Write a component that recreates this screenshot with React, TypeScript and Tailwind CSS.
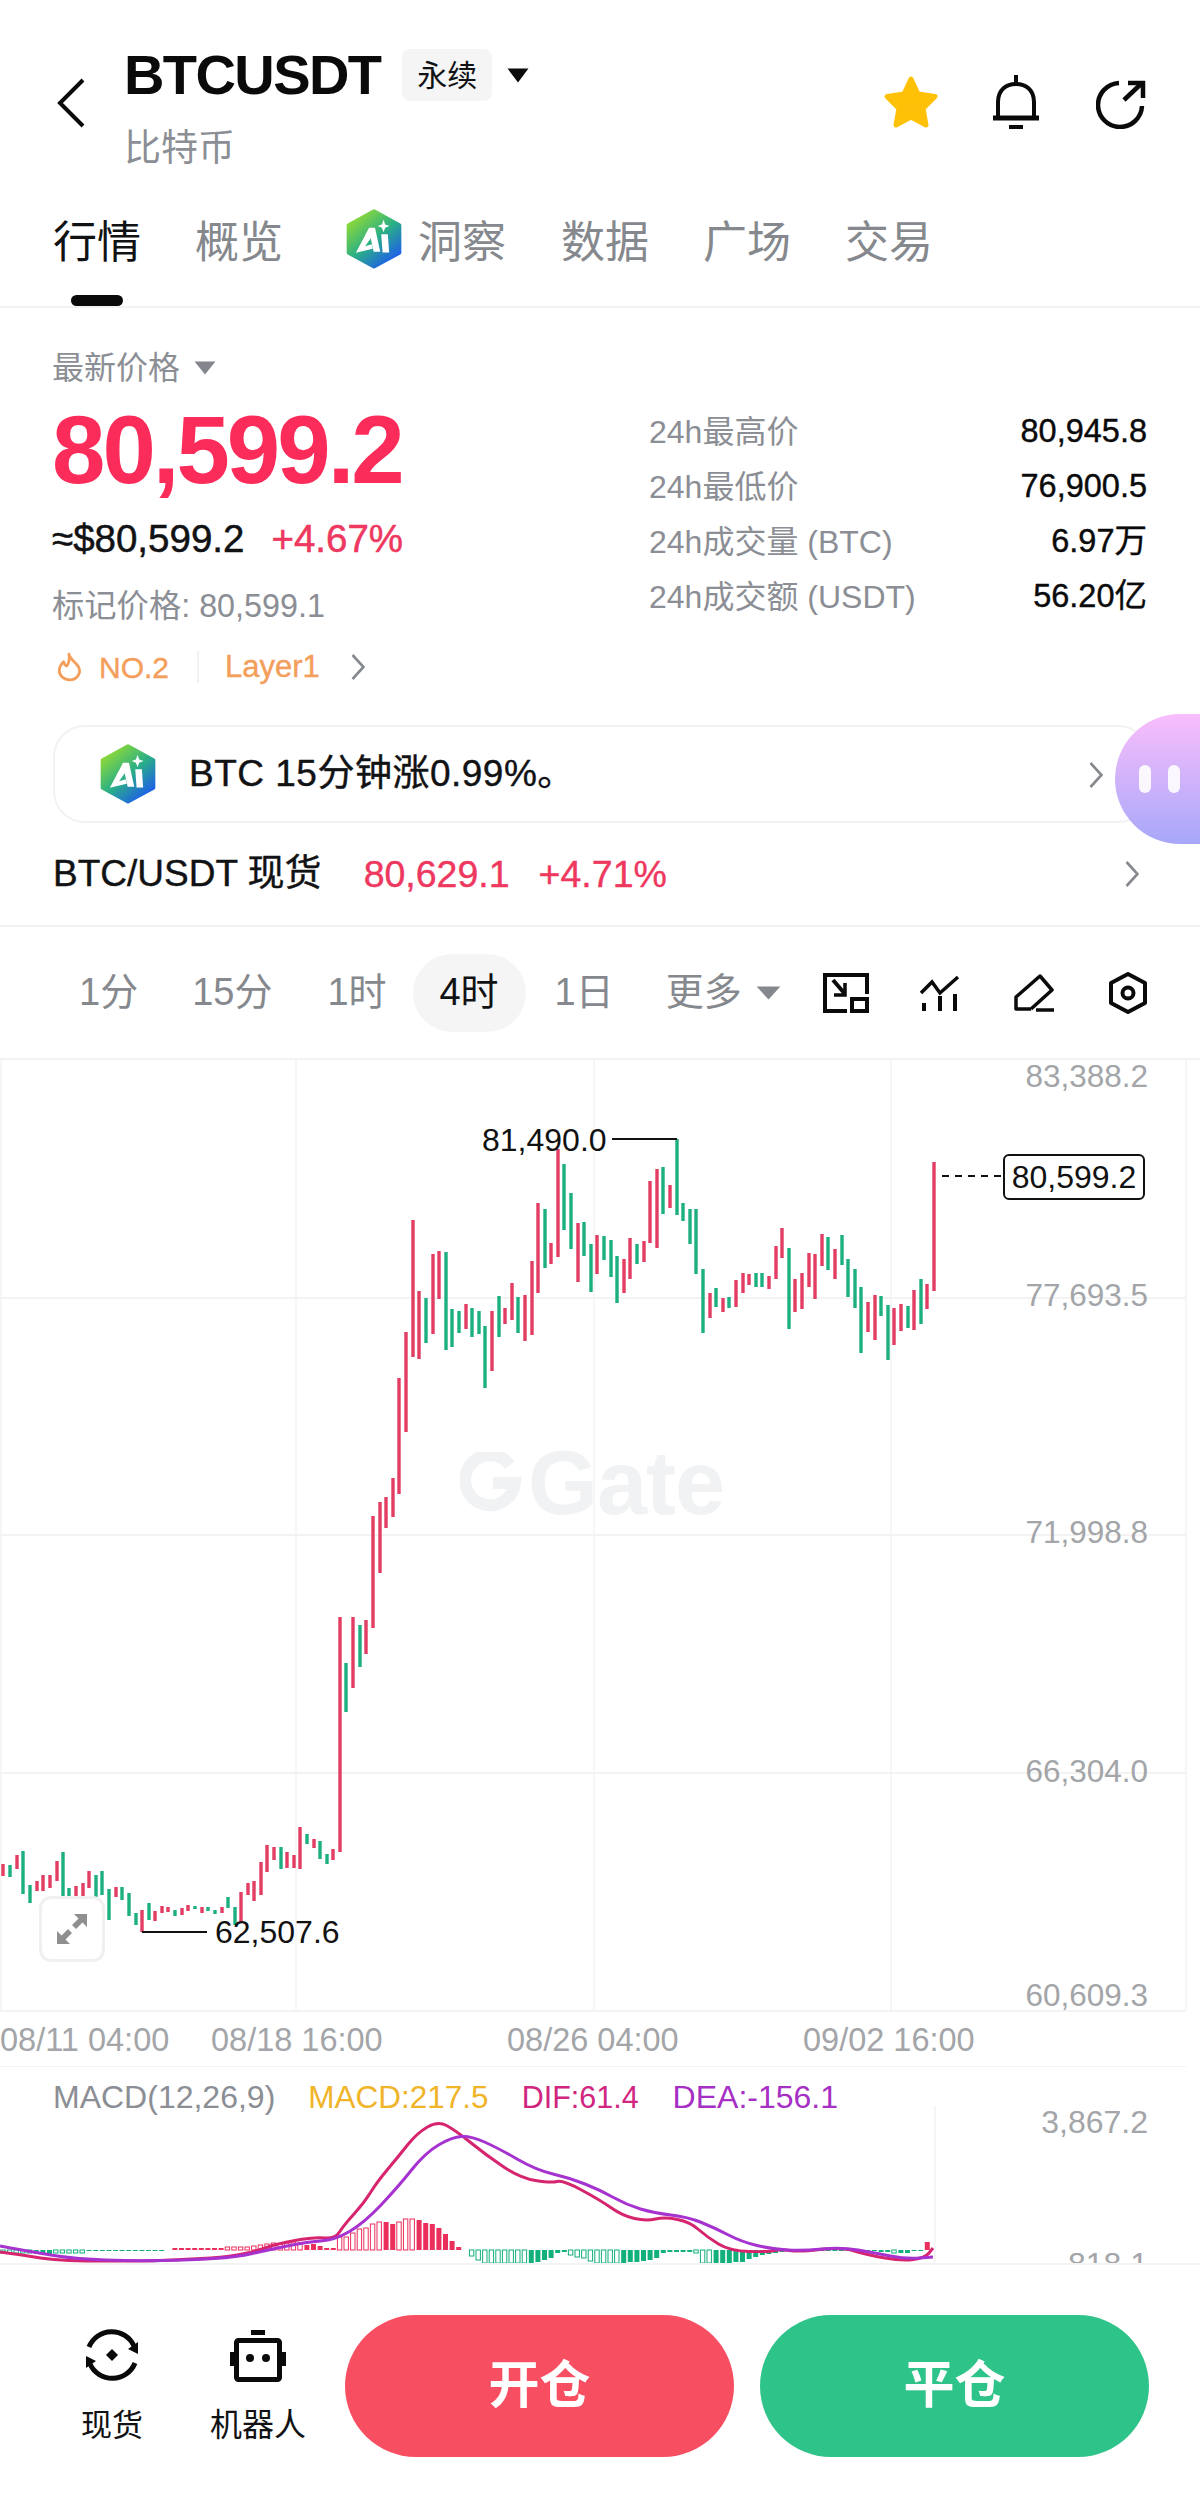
const candles: [number, number, number, string][] = [
  [3,1864,1876,"r"],[10,1865,1877,"g"],[17,1855,1869,"r"],[23,1851,1894,"g"],[30,1885,1903,"g"],[37,1881,1891,"r"],[43,1875,1891,"r"],[50,1875,1888,"r"],
  [57,1861,1881,"r"],[63,1852,1899,"g"],[69,1888,1899,"g"],[76,1886,1897,"r"],[83,1883,1897,"r"],[89,1871,1888,"r"],[96,1875,1897,"g"],[102,1871,1895,"g"],
  [109,1889,1920,"g"],[116,1887,1897,"r"],[122,1887,1900,"g"],[129,1893,1916,"g"],[136,1913,1925,"g"],[142,1910,1932,"r"],[149,1903,1920,"g"],[155,1911,1921,"r"],
  [162,1906,1913,"r"],[168,1907,1912,"r"],[175,1910,1916,"g"],[182,1908,1915,"r"],[188,1905,1911,"r"],[195,1906,1909,"g"],[202,1907,1913,"r"],[208,1907,1911,"g"],
  [215,1910,1914,"g"],[222,1907,1913,"r"],[228,1897,1908,"g"],[235,1907,1925,"g"],[241,1892,1923,"r"],[248,1883,1895,"r"],[254,1881,1901,"r"],[261,1862,1895,"r"],
  [267,1845,1872,"r"],[274,1847,1860,"r"],[281,1847,1869,"g"],[287,1852,1868,"r"],[294,1855,1868,"r"],[300,1827,1869,"r"],[307,1834,1844,"g"],[314,1839,1848,"r"],
  [320,1841,1859,"g"],[327,1854,1864,"g"],[333,1849,1860,"r"],[340,1617,1852,"r"],[346,1663,1712,"g"],[353,1617,1688,"r"],[360,1625,1667,"g"],[366,1620,1654,"r"],
  [373,1516,1628,"r"],[380,1502,1573,"r"],[386,1497,1528,"r"],[393,1478,1517,"r"],[399,1378,1494,"r"],[406,1332,1432,"r"],[413,1220,1357,"r"],[419,1291,1359,"r"],
  [426,1298,1343,"g"],[433,1254,1334,"r"],[439,1251,1299,"r"],[446,1252,1350,"g"],[452,1309,1347,"g"],[459,1311,1333,"g"],[466,1304,1329,"r"],[472,1308,1337,"g"],
  [479,1311,1334,"g"],[485,1326,1388,"g"],[492,1311,1371,"r"],[499,1296,1337,"g"],[505,1308,1324,"r"],[512,1283,1320,"r"],[518,1297,1333,"g"],[525,1295,1341,"r"],
  [532,1261,1335,"r"],[538,1203,1293,"r"],[545,1209,1268,"g"],[551,1243,1264,"r"],[558,1149,1257,"r"],[564,1164,1230,"g"],[571,1193,1249,"g"],[578,1223,1282,"r"],
  [584,1222,1256,"g"],[591,1244,1292,"g"],[597,1235,1274,"r"],[604,1236,1260,"g"],[611,1240,1277,"g"],[617,1256,1303,"g"],[624,1259,1293,"r"],[630,1238,1279,"r"],
  [637,1244,1264,"g"],[644,1241,1262,"r"],[650,1181,1243,"r"],[657,1169,1248,"r"],[663,1167,1214,"g"],[670,1185,1208,"r"],[677,1139,1215,"g"],[683,1203,1221,"g"],
  [690,1209,1244,"g"],[696,1209,1274,"g"],[703,1269,1333,"g"],[710,1293,1318,"r"],[716,1288,1307,"g"],[723,1298,1312,"r"],[729,1297,1308,"g"],[736,1280,1307,"r"],
  [743,1273,1293,"r"],[749,1274,1285,"r"],[756,1273,1287,"g"],[762,1273,1287,"g"],[769,1276,1289,"r"],[776,1246,1279,"r"],[782,1228,1258,"r"],[789,1248,1329,"g"],
  [795,1279,1312,"r"],[802,1273,1309,"r"],[809,1253,1287,"r"],[815,1254,1299,"r"],[822,1234,1266,"r"],[828,1237,1270,"g"],[835,1249,1279,"r"],[842,1235,1265,"g"],
  [848,1259,1297,"g"],[855,1269,1308,"g"],[861,1287,1353,"g"],[868,1302,1332,"r"],[875,1295,1340,"r"],[881,1296,1316,"g"],[888,1305,1360,"g"],[894,1308,1345,"r"],
  [901,1304,1331,"r"],[908,1306,1328,"g"],[914,1290,1330,"r"],[921,1279,1324,"g"],[927,1284,1309,"r"],[934,1162,1291,"r"],
];

const hist = [
  -3,-3,-3,-3,-3,-4,-4,-4,-3,-3,-3,-3,-3,-1,-1,-1,-1,-1,-1,-1,-1,-1,-1,-1,-1,0,
  2,2,2,2,2,2,2,2,3,3,3,3,4,5,6,7,6,7,8,7,5,6,4,2,2,
  13,13,17,21,22,26,28,28,26,28,31,31,30,27,26,22,16,9,3,0,
  -6,-10,-13,-13,-13,-13,-13,-13,-13,-13,-12,-10,-8,-3,-2,-5,-7,-8,-11,-13,-13,-13,-13,-13,
  -12,-12,-11,-10,-8,-3,-2,-2,-2,-2,-3,-13,-13,-13,-13,-13,-12,-12,-9,-7,-5,-4,-3,-2,-1,
  -1,-1,-1,-1,-1,-1,-1,-1,-1,-1,-1,-1,-1,-2,-2,-3,-3,-3,-1,-1,8,
];
const hollowRanges = [[0, 4], [8, 12], [26, 45], [51, 57], [60, 62], [71, 79], [86, 93], [102, 107], [132, 135], [141, 141]];
const isHollow = (i: number) => hollowRanges.some(([a, b]) => i >= a && i <= b);

const dif: [number, number][] = [
  [0,2252],[23,2255],[46,2259],[77,2261],[115,2261],[153,2261],[191,2259],[230,2257],[260,2250],[276,2244],[314,2237],[335,2239],[344,2225],[364,2203],[377,2182],
  [398,2157],[417,2133],[438,2121],[455,2130],[486,2155],[520,2178],[551,2183],[563,2180],[600,2200],[623,2216],[646,2221],[665,2217],[690,2222],[707,2237],[730,2251],
  [768,2252],[780,2249],[799,2252],[841,2247],[868,2255],[902,2261],[925,2258],[933,2248],
];
const dea: [number, number][] = [
  [0,2246],[38,2253],[77,2259],[134,2261],[191,2260],[237,2257],[268,2250],[306,2242],[335,2240],[364,2223],[398,2187],[425,2153],[452,2137],[471,2136],[498,2148],
  [536,2170],[570,2178],[600,2190],[627,2205],[654,2213],[688,2217],[715,2228],[742,2242],[772,2249],[803,2251],[841,2247],[875,2253],[906,2259],[933,2257],
];

// smooth a list of points through the midpoints
function smooth(pts: [number, number][]) {
  let d = `M${pts[0][0]} ${pts[0][1]}`;
  for (let i = 1; i < pts.length - 1; i++) {
    const mx = (pts[i][0] + pts[i + 1][0]) / 2;
    const my = (pts[i][1] + pts[i + 1][1]) / 2;
    d += ` Q${pts[i][0]} ${pts[i][1]} ${mx} ${my}`;
  }
  const last = pts[pts.length - 1];
  return d + ` L${last[0]} ${last[1]}`;
}

const stats = [
  { label: "24h最高价", value: "80,945.8" },
  { label: "24h最低价", value: "76,900.5" },
  { label: "24h成交量 (BTC)", value: "6.97万" },
  { label: "24h成交额 (USDT)", value: "56.20亿" },
];

function Chevron({ className = "" }: { className?: string }) {
  return (
    <svg width="14" height="28" viewBox="0 0 14 28" fill="none" stroke="#85888d" strokeWidth="2.6" className={className}>
      <path d="M1.5 2 L12.5 14 L1.5 26" />
    </svg>
  );
}

function Caret({ color, w, h }: { color: string; w: number; h: number }) {
  return (
    <svg width={w} height={h} viewBox="0 0 20 14" preserveAspectRatio="none">
      <path d="M0.5 0.5 H19.5 L10 13.5 Z" fill={color} />
    </svg>
  );
}

function AiLogo({ size, id }: { size: number; id: string }) {
  return (
    <svg width={size} height={size * 1.07} viewBox="20 14 170 180" className="shrink-0">
      <defs>
        <linearGradient id={id} x1="0.15" y1="0.1" x2="0.8" y2="0.95">
          <stop offset="0" stopColor="#8bd83a" />
          <stop offset="0.5" stopColor="#2bb085" />
          <stop offset="1" stopColor="#1d5fe8" />
        </linearGradient>
      </defs>
      <path d="M105 20 L182 62 V146 L105 188 L28 146 V62 Z" fill={`url(#${id})`} stroke={`url(#${id})`} strokeWidth="12" strokeLinejoin="round" />
      <path d="M90 70 H108 L124 143 H104 L95 102 L78 126 L98 120 L101 134 L50 146 Z" fill="#fff" />
      <path d="M127 90 H147 L151 145 H131 Z" fill="#fff" />
      <path d="M134 46 L139 60 L152 65 L139 70 L134 84 L129 70 L116 65 L129 60 Z" fill="#fff" />
    </svg>
  );
}

function Tab({ label, active }: { label: string; active?: boolean }) {
  return (
    <div className={`relative h-[110px] pt-[17px] text-[44px] leading-[60px] ${active ? "text-[#111214]" : "text-[#85888d]"}`}>
      {label}
      {active && <div className="absolute left-[18px] top-[99px] h-[11px] w-[52px] rounded-full bg-[#0a0a0a]" />}
    </div>
  );
}

export default function App() {
  return (
    <div className="h-[2500px] w-[1200px] overflow-hidden bg-white text-[#111214] [font-family:'Liberation_Sans','Noto_Sans_CJK_SC',sans-serif]">
      {/* header */}
      <div className="flex h-[196px] items-start">
        <svg width="30" height="52" viewBox="0 0 30 52" fill="none" stroke="#0a0a0a" strokeWidth="4" className="ml-[56px] mt-[77px]">
          <path d="M27 3 L4 26 L27 49" />
        </svg>
        <div className="ml-[38px] mt-[41px]">
          <div className="flex h-[68px] items-center">
            <span className="text-[56px] font-bold leading-[68px] tracking-[-1.6px] text-[#0a0a0a]">BTCUSDT</span>
            <span className="ml-[22px] flex h-[52px] w-[90px] items-center justify-center rounded-[8px] bg-[#f5f5f5] text-[30px]">永续</span>
            <span className="ml-[15px]"><Caret color="#0a0a0a" w={22} h={15} /></span>
          </div>
          <div className="mt-[15px] text-[37px] leading-[50px] text-[#8b8e94]">比特币</div>
        </div>
        <div className="ml-auto mr-[54px] mt-[74px] flex items-start">
          <svg width="58" height="56" viewBox="0 0 58 56">
            <path d="M29 5 L36 20 L53 22.5 L41 34.5 L44 51 L29 43 L14 51 L17 34.5 L5 22.5 L22 20 Z" fill="#ffc107" stroke="#ffc107" strokeWidth="5" strokeLinejoin="round" />
          </svg>
          <svg width="48" height="56" viewBox="0 0 48 56" fill="none" stroke="#0a0a0a" className="ml-[52px]">
            <path d="M24 1 V10" strokeWidth="4" />
            <path d="M6 43 V28 C6 16 14 10 24 10 C34 10 42 16 42 28 V43" strokeWidth="4" />
            <path d="M1 44 H47" strokeWidth="5" />
            <path d="M17 53 H31" strokeWidth="4" />
          </svg>
          <svg width="50" height="50" viewBox="0 0 50 50" fill="none" stroke="#0a0a0a" strokeWidth="4.5" className="ml-[56px] mt-[5px]">
            <path d="M23 4 A22 22 0 1 0 46 27" />
            <path d="M28 21 L46 4" />
            <path d="M32 4 H47 V19" />
          </svg>
        </div>
      </div>

      {/* tabs */}
      <div className="flex h-[112px] border-b-2 border-[#f2f2f2] pl-[53px]">
        <Tab label="行情" active />
        <div className="ml-[54px]"><Tab label="概览" /></div>
        <div className="ml-[63px] mt-[13px]"><AiLogo size={56} id="ai-tab" /></div>
        <div className="ml-[16px]"><Tab label="洞察" /></div>
        <div className="ml-[55px]"><Tab label="数据" /></div>
        <div className="ml-[54px]"><Tab label="广场" /></div>
        <div className="ml-[54px]"><Tab label="交易" /></div>
      </div>

      {/* price summary */}
      <div className="flex h-[417px] pl-[52px] pr-[53px] pt-[36px]">
        <div className="w-[597px]">
          <div className="flex h-[48px] items-center text-[32px] text-[#8b8e94]">
            最新价格
            <span className="ml-[14px]"><Caret color="#83868c" w={22} h={14} /></span>
          </div>
          <div className="mt-[6px] text-[96px] font-bold leading-[104px] tracking-[-3px] text-[#fb2c5a]">80,599.2</div>
          <div className="mt-[7px] flex items-center text-[38.5px] leading-[60px]">
            <span className="[-webkit-text-stroke:0.5px_#111214]">≈$80,599.2</span>
            <span className="ml-[27px] text-[#ee3860] [-webkit-text-stroke:0.5px_#ee3860]">+4.67%</span>
          </div>
          <div className="mt-[7px] text-[32.3px] leading-[60px] text-[#8b8e94]">标记价格: 80,599.1</div>
          <div className="flex h-[62px] items-center text-[30px] text-[#f49e5b]">
            <svg width="26" height="30" viewBox="0 0 24 28" fill="none" stroke="#f49e5b" strokeWidth="2.6" className="ml-[5px]">
              <path d="M11 2 C12 7 17 9 20 14 C23 20 18 26 12 26 C6 26 2 22 2 17 C2 13 4 11 6 9 C7 12 8 13 9 13 C11 10 12 6 11 2 Z" strokeLinejoin="round" />
            </svg>
            <span className="ml-[16px] [-webkit-text-stroke:0.4px_#f49e5b]">NO.2</span>
            <span className="ml-[28px] h-[32px] w-[2px] bg-[#f2f2f2]" />
            <span className="ml-[26px] text-[31px] [-webkit-text-stroke:0.4px_#f49e5b]">Layer1</span>
            <Chevron className="ml-[31px]" />
          </div>
        </div>
        <div className="flex-1 pt-[60px]">
          {stats.map((s) => (
            <div key={s.label} className="flex h-[55px] items-center justify-between text-[32px]">
              <span className="text-[#8b8e94]">{s.label}</span>
              <span className="text-[32.5px] text-[#0a0a0a] [-webkit-text-stroke:0.4px_#0a0a0a]">{s.value}</span>
            </div>
          ))}
        </div>
      </div>

      {/* ai hint */}
      <div className="relative ml-[53px] flex h-[98px] w-[1097px] items-center rounded-[32px] border-2 border-[#f2f2f2] pl-[45px]">
        <AiLogo size={56} id="ai-card" />
        <span className="ml-[33px] text-[37px] tracking-[0.5px] [-webkit-text-stroke:0.4px_#111214]">BTC 15分钟涨0.99%。</span>
        <Chevron className="absolute left-[1034px] top-[34px]" />
        <div className="absolute left-[1060px] top-[-13px] flex h-[130px] w-[87px] items-center rounded-l-[65px] bg-gradient-to-b from-[#f9bdfb] to-[#a7a7f9] pl-[24px]">
          <span className="h-[28px] w-[12px] rounded-full bg-white/90" />
          <span className="ml-[17px] h-[28px] w-[12px] rounded-full bg-white/90" />
        </div>
      </div>

      {/* spot row */}
      <div className="flex h-[104px] items-center border-b-2 border-[#f2f2f2] pl-[53px] pr-[61px] text-[37.5px]">
        <span className="text-[37px] [-webkit-text-stroke:0.4px_#111214]">BTC/USDT 现货</span>
        <span className="ml-[42px] text-[#ee3860] [-webkit-text-stroke:0.4px_#ee3860]">80,629.1</span>
        <span className="ml-[29px] text-[#ee3860] [-webkit-text-stroke:0.4px_#ee3860]">+4.71%</span>
        <Chevron className="ml-auto" />
      </div>

      {/* timeframe row */}
      <div className="flex h-[131px] items-center text-[38px] text-[#85888d]">
        <span className="ml-[79px]">1分</span>
        <span className="ml-[54px]">15分</span>
        <span className="ml-[55px]">1时</span>
        <span className="ml-[26px] flex h-[78px] w-[113px] items-center justify-center rounded-full bg-[#f5f5f5] text-[#111214]">4时</span>
        <span className="ml-[29px]">1日</span>
        <span className="ml-[52px]">更多</span>
        <span className="ml-[14px]"><Caret color="#85888d" w={25} h={14} /></span>
        <svg width="46" height="40" viewBox="0 0 46 40" fill="none" stroke="#0a0a0a" strokeWidth="4" className="ml-[42px]">
          <path d="M44 21 V2 H2 V38 H24" />
          <path d="M10 7 L22 21" />
          <path d="M22 10 V22 H11" strokeWidth="3.5" />
          <rect x="29" y="26" width="15" height="12" />
        </svg>
        <svg width="40" height="36" viewBox="0 0 40 36" fill="none" stroke="#0a0a0a" strokeWidth="3.5" className="ml-[51px]">
          <path d="M1 18 L12 7 L20 18 L38 2" />
          <path d="M4 28 V36 M20 21 V36 M35 19 V36" strokeWidth="4" />
        </svg>
        <svg width="40" height="38" viewBox="0 0 40 38" fill="none" stroke="#0a0a0a" strokeWidth="3.5" className="ml-[54px]">
          <path d="M17 35 H2 V23 L26 2 L38 16 L17 35" strokeLinejoin="round" />
          <path d="M22 36 H40" strokeWidth="3.5" />
        </svg>
        <svg width="38" height="42" viewBox="0 0 38 42" fill="none" stroke="#0a0a0a" strokeWidth="4" className="ml-[55px]">
          <path d="M19 2 L36 11 V31 L19 40 L2 31 V11 Z" strokeLinejoin="round" />
          <circle cx="19" cy="21" r="5.5" />
        </svg>
      </div>

      {/* main chart */}
      <div className="relative h-[1008px] border-t-2 border-[#f3f3f3]">
        <div className="absolute left-[460px] top-[392px] flex h-[62px] items-center text-[90px] font-bold leading-[62px] tracking-[-1px] text-[#f1f2f3]">
          <svg width="62" height="62" viewBox="0 0 62 62" fill="none" stroke="#f1f2f3" className="mr-[6px]">
            <path d="M50 13 A25 25 0 1 0 55 31 H33" strokeWidth="12" />
          </svg>
          Gate
        </div>
        <svg width="1200" height="1006" viewBox="0 1060 1200 1006" className="absolute left-0 top-0">
          {[1298, 1535, 1773, 2011].map((y) => (
            <line key={y} x1="0" x2="1186" y1={y} y2={y} stroke="#f3f3f3" strokeWidth="2" />
          ))}
          {[1, 296, 594, 891, 1186].map((x) => (
            <line key={x} x1={x} x2={x} y1="1060" y2="2011" stroke="#f3f3f3" strokeWidth="1.5" />
          ))}
          {candles.map(([x, top, bottom, c]) => (
            <rect key={x} x={x - 1.7} y={top} width="3.4" height={bottom - top} fill={c === "r" ? "#e23d63" : "#1caf80"} />
          ))}
          <line x1="612" x2="677" y1="1139" y2="1139" stroke="#111" strokeWidth="2" />
          <line x1="142" x2="207" y1="1932" y2="1932" stroke="#111" strokeWidth="2" />
          <line x1="942" x2="1002" y1="1176" y2="1176" stroke="#111" strokeWidth="2" strokeDasharray="7 6" />
        </svg>

        <span className="absolute left-[482px] top-[60px] text-[32px] leading-[40px] text-[#111]">81,490.0</span>
        <span className="absolute left-[215px] top-[852px] text-[32px] leading-[40px] text-[#111]">62,507.6</span>
        <span className="absolute left-[1003px] top-[94px] flex h-[46px] w-[142px] items-center justify-center rounded-[6px] border-2 border-[#111] bg-white text-[32px] text-[#111]">80,599.2</span>

        <div className="absolute right-[52px] top-[-4px] text-[31.5px] leading-[40px] text-[#a3a5a8]">83,388.2</div>
        <div className="absolute right-[52px] top-[215px] text-[31.5px] leading-[40px] text-[#a3a5a8]">77,693.5</div>
        <div className="absolute right-[52px] top-[452px] text-[31.5px] leading-[40px] text-[#a3a5a8]">71,998.8</div>
        <div className="absolute right-[52px] top-[691px] text-[31.5px] leading-[40px] text-[#a3a5a8]">66,304.0</div>
        <div className="absolute right-[52px] top-[915px] text-[31.5px] leading-[40px] text-[#a3a5a8]">60,609.3</div>

        <div className="absolute left-[0px] top-[960px] text-[32.5px] leading-[40px] text-[#a3a5a8]">08/11 04:00</div>
        <div className="absolute left-[211px] top-[960px] text-[32.5px] leading-[40px] text-[#a3a5a8]">08/18 16:00</div>
        <div className="absolute left-[507px] top-[960px] text-[32.5px] leading-[40px] text-[#a3a5a8]">08/26 04:00</div>
        <div className="absolute left-[803px] top-[960px] text-[32.5px] leading-[40px] text-[#a3a5a8]">09/02 16:00</div>

        <div className="absolute left-[39px] top-[836px] flex h-[66px] w-[66px] items-center justify-center rounded-[12px] border-[3px] border-[#f0f0f0] bg-white/80">
          <svg width="32" height="32" viewBox="0 0 32 32" fill="#8f8f8f">
            <path d="M18 1 H31 V14 L26.5 9.5 L20 16 L16 12 L22.5 5.5 Z" />
            <path d="M14 31 H1 V18 L5.5 22.5 L12 16 L16 20 L9.5 26.5 Z" />
          </svg>
        </div>
      </div>

      {/* macd */}
      <div className="relative h-[199px] overflow-hidden border-b-2 border-[#f3f3f3]">
        <svg width="1200" height="197" viewBox="0 2066 1200 197" className="absolute left-0 top-0">
          <line x1="0" x2="1186" y1="2066" y2="2066" stroke="#f3f3f3" strokeWidth="2" />
          <line x1="935" x2="935" y1="2106" y2="2263" stroke="#f3f3f3" strokeWidth="1.5" />
          {hist.map((v, i) => {
            if (v === 0) return null;
            const x = 3.3 + i * 6.6 - 2.5;
            const y = v > 0 ? 2250 - v : 2250;
            const color = v > 0 ? "#ea2f5c" : "#12b07c";
            const hollow = isHollow(i) && Math.abs(v) > 2;
            return (
              <rect key={i} x={x} y={y} width={hollow ? 4.4 : 5} height={Math.abs(v)} fill={hollow ? "#fff" : color} stroke={hollow ? color : "none"} strokeWidth={hollow ? 1 : 0} />
            );
          })}
          <path d={smooth(dif)} fill="none" stroke="#d6246e" strokeWidth="3" strokeLinejoin="round" />
          <path d={smooth(dea)} fill="none" stroke="#a632cf" strokeWidth="3" strokeLinejoin="round" />
        </svg>
        <div className="absolute left-[53px] top-[11px] flex items-center text-[32px] leading-[40px]">
          <span className="text-[#8b8e94]">MACD(12,26,9)</span>
          <span className="ml-[33px] text-[31.5px] text-[#f0b429]">MACD:217.5</span>
          <span className="ml-[33px] text-[30.5px] text-[#d1267f]">DIF:61.4</span>
          <span className="ml-[34px] text-[#a62fc4]">DEA:-156.1</span>
        </div>
        <div className="absolute right-[52px] top-[36px] text-[32px] leading-[40px] text-[#a3a5a8]">3,867.2</div>
        <div className="absolute right-[52px] top-[178px] text-[32px] leading-[40px] text-[#a3a5a8]">818.1</div>
      </div>

      {/* bottom bar */}
      <div className="flex h-[235px] items-start">
        <div className="ml-[81px] mt-[62px] flex w-[62px] flex-col items-center">
          <svg width="56" height="56" viewBox="0 0 56 56" fill="none" stroke="#0a0a0a" strokeWidth="5">
            <path d="M5 20 A24.5 24.5 0 0 1 50 19" />
            <path d="M44 22 L54 27 L54 15 Z" fill="#0a0a0a" stroke="none" />
            <path d="M51 36 A24.5 24.5 0 0 1 6 37" />
            <path d="M12 34 L2 29 L2 41 Z" fill="#0a0a0a" stroke="none" />
            <path d="M28 22 L34 28 L28 34 L22 28 Z" fill="#0a0a0a" stroke="none" />
          </svg>
          <span className="mt-[23px] whitespace-nowrap text-[31px] leading-[40px]">现货</span>
        </div>
        <div className="ml-[67px] mt-[65px] flex w-[96px] flex-col items-center">
          <svg width="56" height="52" viewBox="0 0 56 52" fill="none" stroke="#0a0a0a" strokeWidth="5">
            <path d="M21 2.5 H35" />
            <rect x="6.5" y="10.5" width="43" height="39" rx="2" />
            <rect x="0" y="22" width="4" height="14" fill="#0a0a0a" stroke="none" />
            <rect x="52" y="22" width="4" height="14" fill="#0a0a0a" stroke="none" />
            <circle cx="20" cy="28" r="4" fill="#0a0a0a" stroke="none" />
            <circle cx="36" cy="28" r="4" fill="#0a0a0a" stroke="none" />
          </svg>
          <span className="mt-[23px] whitespace-nowrap text-[32px] leading-[40px]">机器人</span>
        </div>
        <div className="ml-[39px] mt-[50px] flex h-[142px] w-[389px] items-center justify-center rounded-full bg-[#f84e62] text-[51px] font-bold text-white">开仓</div>
        <div className="ml-[26px] mt-[50px] flex h-[142px] w-[389px] items-center justify-center rounded-full bg-[#2ec388] text-[51px] font-bold text-white">平仓</div>
      </div>
    </div>
  );
}
